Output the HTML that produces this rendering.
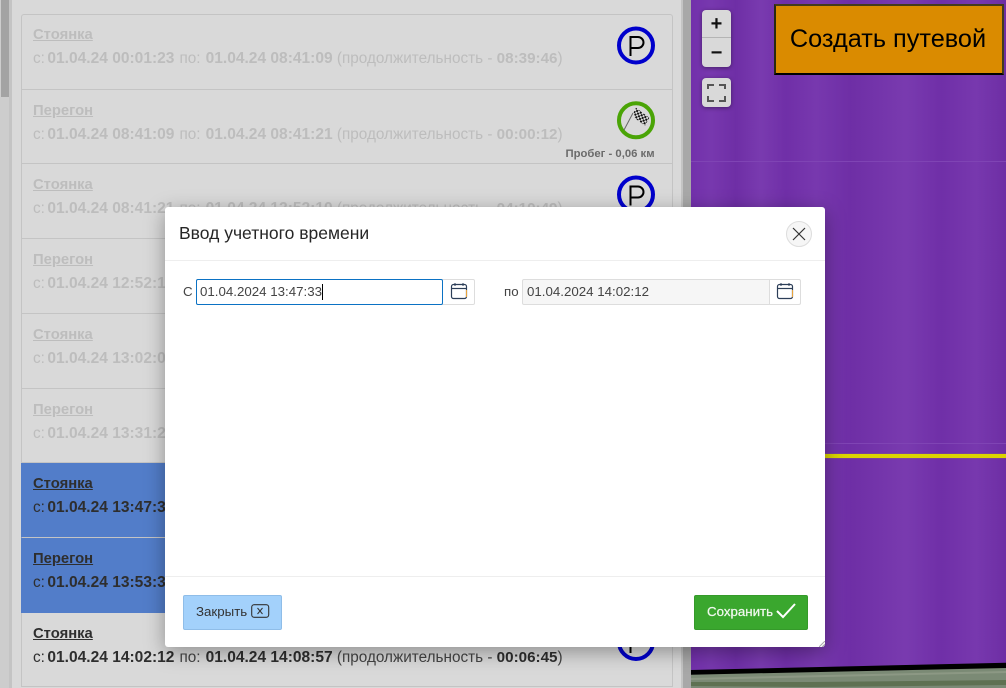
<!DOCTYPE html>
<html><head><meta charset="utf-8"><style>
*{box-sizing:border-box}
html,body{margin:0;padding:0}
body{width:1006px;height:688px;position:relative;overflow:hidden;background:#d9d9d9;font-family:"Liberation Sans",sans-serif}
.a{position:absolute;white-space:nowrap}
.row{position:absolute;left:21px;width:652px;border:1px solid #c4c4c4;border-top:0;height:75px}
.t{position:absolute;left:33px;font-size:14.8px;font-weight:bold;text-decoration:underline;white-space:nowrap;line-height:18px}
.d{position:absolute;left:33px;font-size:15.3px;white-space:nowrap;line-height:18px}
.d .b{font-size:15.55px}
.d .e{font-size:15.2px}
.c{margin-right:-1.8px}
.p{margin:0 .8px}
.g{color:#bdbdbd}.k{color:#2e2e2e}
.b{font-weight:bold}
.o{color:#262626}
.i{font-size:13.3px;line-height:15px}
</style></head><body>
<div class="a" style="left:0;top:0;width:10px;height:688px;background:#cdcdcd"></div>
<div class="a" style="left:1px;top:0;width:8px;height:97px;background:#a3a3a3"></div>
<div class="a" style="left:9px;top:0;width:3px;height:688px;background:#c4c4c4"></div>
<div class="a" style="left:683px;top:0;width:8px;height:688px;background:#a8a8a8"></div>
<div class="a" style="left:681px;top:0;width:2px;height:688px;background:#c4c4c4"></div>

<div class="row" style="top:14px;height:76px;border-top:1px solid #c4c4c4;border-radius:3px 3px 0 0"></div>
<div class="row" style="top:90px;height:74px"></div>
<div class="row" style="top:164px"></div>
<div class="row" style="top:239px"></div>
<div class="row" style="top:314px"></div>
<div class="row" style="top:389px;height:74px"></div>
<div class="row" style="top:463px;background:#527dc9;border-color:#527dc9;border-bottom:1px solid #c4c4c4"></div>
<div class="row" style="top:538px;background:#527dc9;border-color:#527dc9"></div>
<div class="row" style="top:613px;height:74px"></div>

<div class="t g" style="top:26px">Стоянка</div>
<div class="d g" style="top:50px"><span class="c">с:</span> <span class="b">01.04.24 00:01:23</span> <span class="p">по:</span> <span class="b">01.04.24 08:41:09</span> (продолжительность - <span class="b e">08:39:46</span>)</div>
<div class="t g" style="top:102px">Перегон</div>
<div class="d g" style="top:126px"><span class="c">с:</span> <span class="b">01.04.24 08:41:09</span> <span class="p">по:</span> <span class="b">01.04.24 08:41:21</span> (продолжительность - <span class="b e">00:00:12</span>)</div>
<div class="t g" style="top:176px">Стоянка</div>
<div class="d g" style="top:200px"><span class="c">с:</span> <span class="b">01.04.24 08:41:21</span> <span class="p">по:</span> <span class="b">01.04.24 12:52:10</span> (продолжительность - <span class="b e">04:10:49</span>)</div>
<div class="t g" style="top:251px">Перегон</div>
<div class="d g" style="top:275px"><span class="c">с:</span> <span class="b">01.04.24 12:52:10</span></div>
<div class="t g" style="top:326px">Стоянка</div>
<div class="d g" style="top:350px"><span class="c">с:</span> <span class="b">01.04.24 13:02:01</span></div>
<div class="t g" style="top:401px">Перегон</div>
<div class="d g" style="top:425px"><span class="c">с:</span> <span class="b">01.04.24 13:31:20</span></div>
<div class="t k" style="top:475px">Стоянка</div>
<div class="d k" style="top:499px"><span class="c">с:</span> <span class="b">01.04.24 13:47:33</span></div>
<div class="t k" style="top:550px">Перегон</div>
<div class="d k" style="top:574px"><span class="c">с:</span> <span class="b">01.04.24 13:53:33</span></div>
<div class="t k" style="top:625px">Стоянка</div>
<div class="d k" style="top:649px"><span class="c">с:</span> <span class="b">01.04.24 14:02:12</span> <span class="p" style="color:#444">по:</span> <span class="b">01.04.24 14:08:57</span> <span style="color:#444">(продолжительность -</span> <span class="b e">00:06:45</span><span style="color:#444">)</span></div>

<svg class="a" style="left:610px;top:20px" width="50" height="660" viewBox="0 0 50 660">
<defs><pattern id="ch" width="4" height="4" patternUnits="userSpaceOnUse" patternTransform="rotate(25)"><rect width="4" height="4" fill="#ddd"/><rect width="2" height="2" fill="#111"/><rect x="2" y="2" width="2" height="2" fill="#111"/></pattern></defs>
<g fill="none">
<circle cx="26" cy="25.5" r="17" stroke="#0000cc" stroke-width="4"/>
<circle cx="26" cy="100.3" r="17" stroke="#4aa406" stroke-width="4"/>
<circle cx="26" cy="174.5" r="17" stroke="#0000cc" stroke-width="4"/>
<circle cx="26" cy="622" r="17" stroke="#0000cc" stroke-width="4"/>
<path d="M20.500 36V17h7.500a5.500 5.500 0 0 1 0 11h-7.500M20.500 185.500V166.500h7.500a5.500 5.500 0 0 1 0 11h-7.500M20.500 610v23" stroke="#000" stroke-width="2"/>
<path d="M14 110L23 93" stroke="#666" stroke-width="1"/>
</g>
<path d="M23.300 93.300L26 87.700 39.300 97.700 35 105.700 25 98.300z" fill="url(#ch)"/>
</svg>
<div class="a b" style="left:565.500px;top:148px;font-size:11.300px;font-weight:bold;color:#6b6b6b;line-height:13px">Пробег - 0,06 км</div>

<!-- map -->
<div class="a" style="left:691px;top:0;width:315px;height:688px;overflow:hidden;background:
linear-gradient(90deg,rgba(255,255,255,0) 0,rgba(255,255,255,.04) 20px,rgba(0,0,0,.03) 45px,rgba(255,255,255,.05) 70px,rgba(0,0,0,.02) 95px,rgba(255,255,255,.04) 125px,rgba(0,0,0,.03) 160px,rgba(255,255,255,.05) 215px,rgba(0,0,0,.02) 250px,rgba(255,255,255,.04) 285px,rgba(0,0,0,.04) 315px),#7230ab">
<div class="a" style="left:0;top:161px;width:315px;height:1px;background:#7f44b4"></div>
<div class="a" style="left:0;top:443px;width:315px;height:1px;background:#7f44b4"></div>
<div class="a" style="left:125px;top:454px;width:190px;height:4px;background:#dcd400;box-shadow:0 0 1px #a59a40"></div>
<svg class="a" style="left:0;top:660px" width="315" height="28">
<polygon points="0,14 315,7 315,28 0,28" fill="#7b8a75"/>
<polygon points="0,22 120,22 315,20 315,25 120,27 0,26" fill="#5f7152"/>
<polygon points="0,18 315,11 315,13 0,20" fill="#8c9884"/>
<polygon points="0,10 315,2.700 315,8 0,14.700" fill="#000"/>
</svg>
</div>

<div class="a" style="left:702px;top:10px;width:29px;height:57px;background:#d9d9d9;border-radius:4px;box-shadow:0 1px 4px rgba(0,0,0,.4)"></div>
<div class="a" style="left:702px;top:37px;width:29px;height:1px;background:#b4b4b4"></div>
<div class="a" style="left:702px;top:11px;width:29px;text-align:center;font-size:20px;font-weight:bold;line-height:26px;color:#111">+</div>
<div class="a" style="left:702px;top:40px;width:29px;text-align:center;font-size:20px;font-weight:bold;line-height:26px;color:#111">−</div>
<div class="a" style="left:702px;top:78px;width:29px;height:29px;background:#d9d9d9;border-radius:4px;box-shadow:0 1px 4px rgba(0,0,0,.4)"></div>
<svg class="a" style="left:702px;top:78px" width="29" height="29"><path d="M6 11V7h6M17 7h6v4M23 18v5h-6M12 23H6v-5" fill="none" stroke="#555" stroke-width="2"/></svg>

<div class="a" style="left:774px;top:4px;width:230px;height:71px;background:#da8b00;border:2px solid #000;border-top-color:#443b1c;border-left-color:#2a2a10;border-right-color:#443b1c"></div>
<div class="a" style="left:774px;top:4px;width:228px;height:71px;text-align:center;font-size:25.300px;line-height:71px;color:#000">Создать путевой</div>

<!-- modal -->
<div class="a" style="left:165px;top:207px;width:660px;height:440px;background:#fff;border-radius:3px;box-shadow:0 5px 20px rgba(0,0,0,.35)"></div>
<svg class="a" style="left:819px;top:641px" width="6" height="6"><path d="M0 6L6 0M3 6L6 3" stroke="#aaa"/></svg>
<div class="a" style="left:165px;top:260px;width:660px;height:1px;background:#eee"></div>
<div class="a" style="left:165px;top:576px;width:660px;height:1px;background:#eee"></div>
<div class="a o" style="left:179px;top:222px;font-size:17.500px;line-height:22px">Ввод учетного времени</div>
<div class="a" style="left:786px;top:221px;width:26px;height:26px;border:1px solid #ddd;border-radius:50%;background:#f6f6f6"></div>
<svg class="a" style="left:786px;top:221px" width="26" height="26"><path d="M7 7l12 12M19 7L7 19" stroke="#333" stroke-width="1.200" fill="none"/></svg>

<div class="a i" style="left:183px;top:284px;color:#444">С</div>
<div class="a" style="left:196px;top:279px;width:279px;height:26px;border:1px solid #ddd;border-radius:2px;background:#fff"></div>
<div class="a" style="left:196px;top:279px;width:247px;height:26px;border:1px solid #0b72c4;border-radius:2px;background:#fff"></div>
<div class="a i" style="left:200px;top:284px;color:#444">01.04.2024 13:47:33</div>
<div class="a" style="left:322px;top:284px;width:1px;height:16px;background:#000"></div>

<div class="a i" style="left:504px;top:284px;color:#444">по</div>
<div class="a" style="left:522px;top:279px;width:279px;height:26px;border:1px solid #ddd;border-radius:2px;background:#f6f6f6"></div>
<div class="a" style="left:769px;top:280px;width:31px;height:24px;border-left:1px solid #ddd;background:#fff;border-radius:0 2px 2px 0"></div>
<div class="a i" style="left:527px;top:284px;color:#444">01.04.2024 14:02:12</div>
<svg class="a" style="left:450px;top:282px" width="18" height="18"><rect x="1.500" y="2.500" width="15" height="14" rx="2" fill="none" stroke="#2c3e58" stroke-width="1.200"/><path d="M1.500 6.500h15" stroke="#2c3e58" stroke-width="1.200"/><path d="M5 1v3M13 1v3" stroke="#2c3e58"/><path d="M16.500 8v7" stroke="#e8a33c"/></svg>
<svg class="a" style="left:776px;top:282px" width="18" height="18"><rect x="1.500" y="2.500" width="15" height="14" rx="2" fill="none" stroke="#2c3e58" stroke-width="1.200"/><path d="M1.500 6.500h15" stroke="#2c3e58" stroke-width="1.200"/><path d="M5 1v3M13 1v3" stroke="#2c3e58"/><path d="M16.500 8v7" stroke="#e8a33c"/></svg>

<div class="a" style="left:183px;top:595px;width:99px;height:35px;background:#a3d1fb;border:1px solid #8fbde8;border-radius:2px"></div>
<div class="a i" style="left:196px;top:604px;color:#333">Закрыть</div>
<svg class="a" style="left:251px;top:604px" width="19" height="15"><rect x=".7" y=".7" width="17" height="12.600" rx="2.500" fill="none" stroke="#333" stroke-width="1.100"/><path d="M6.500 4l5 6M11.500 4l-5 6" stroke="#333" fill="none"/></svg>

<div class="a" style="left:694px;top:595px;width:114px;height:35px;background:#3aa72e;border:1px solid #359a2a;border-radius:2px"></div>
<div class="a i" style="left:707px;top:604px;color:#f0f8ee;-webkit-text-stroke:.25px #f0f8ee">Сохранить</div>
<svg class="a" style="left:776px;top:602px" width="20" height="18"><path d="M1 9l6 6L19 2" fill="none" stroke="#fff" stroke-width="2"/></svg>
</body></html>
